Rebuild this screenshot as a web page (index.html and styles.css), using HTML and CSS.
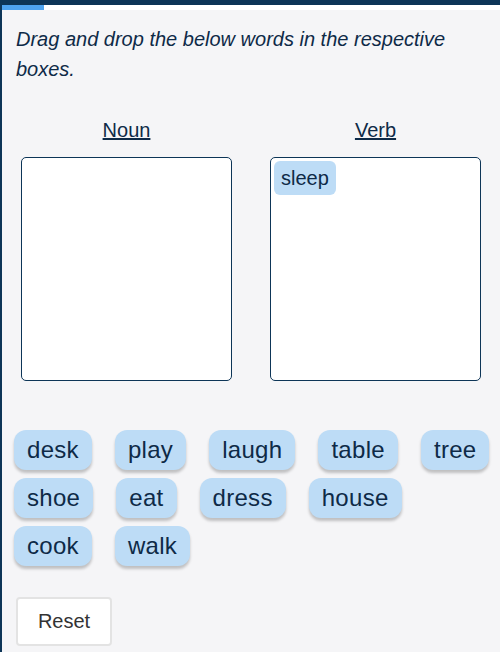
FILE: index.html
```html
<!DOCTYPE html>
<html lang="en">
<head>
<meta charset="utf-8">
<title>Drag and drop</title>
<link rel="stylesheet" href="styles.css">
</head>
<body>
<div class="topbar"></div>
<div class="progress"><div class="progress-fill" style="width:42px"></div></div>
<main class="panel">
  <p class="prompt">Drag and drop the below words in the respective boxes.</p>
  <div class="columns">
    <section class="col">
      <h2 class="col-title">Noun</h2>
      <div class="dropbox"></div>
    </section>
    <section class="col">
      <h2 class="col-title">Verb</h2>
      <div class="dropbox">
        <span class="chip chip-small">sleep</span>
      </div>
    </section>
  </div>
  <div class="pool">
    <span class="chip">desk</span>
    <span class="chip">play</span>
    <span class="chip">laugh</span>
    <span class="chip">table</span>
    <span class="chip">tree</span>
    <span class="chip">shoe</span>
    <span class="chip">eat</span>
    <span class="chip">dress</span>
    <span class="chip">house</span>
    <span class="chip">cook</span>
    <span class="chip">walk</span>
  </div>
  <button class="reset" type="button">Reset</button>
</main>
</body>
</html>
```
FILE: styles.css
```css
html, body {
  margin: 0;
  padding: 0;
  background: #f5f5f7;
  font-family: "Liberation Sans", Arial, sans-serif;
  color: #0e2a47;
}
.topbar {
  height: 5px;
  background: #0d3557;
}
.progress {
  height: 5px;
  background: #ffffff;
  border-left: 2px solid #0d3557;
}
.progress-fill {
  height: 100%;
  background: #4ea3ef;
}
.panel {
  border-left: 2px solid #0d3557;
  min-height: 642px;
  box-sizing: border-box;
  padding-top: 14px;
}
.prompt {
  margin: 0;
  padding: 0 14px;
  font-size: 20px;
  font-style: italic;
  line-height: 30px;
}
.columns {
  display: grid;
  grid-template-columns: 1fr 1fr;
  margin-top: 35px;
}
.col {
  display: flex;
  flex-direction: column;
  align-items: center;
}
.col-title {
  margin: 0;
  font-size: 20px;
  font-weight: normal;
  text-decoration: underline;
  line-height: 23px;
}
.dropbox {
  margin-top: 15px;
  width: 211px;
  height: 224px;
  box-sizing: border-box;
  background: #ffffff;
  border: 1px solid #0d3557;
  border-radius: 5px;
  padding: 3px;
  display: flex;
  flex-wrap: wrap;
  align-content: flex-start;
}
.chip {
  display: inline-block;
  background: #bddcf6;
  color: #0e2a47;
  font-size: 24px;
  line-height: 28px;
  letter-spacing: 0.3px;
  padding: 6px 13px;
  border-radius: 12px;
  box-shadow: 0 3px 3px rgba(0, 0, 0, 0.22);
}
.chip-small {
  font-size: 20px;
  line-height: 24px;
  letter-spacing: 0;
  padding: 5px 7px;
  border-radius: 6px;
  box-shadow: none;
}
.pool {
  display: flex;
  flex-wrap: wrap;
  column-gap: 23px;
  row-gap: 8px;
  margin-top: 49px;
  padding: 0 8px 0 12px;
}
.reset {
  display: block;
  margin: 31px 0 0 14px;
  width: 96px;
  height: 49px;
  background: #ffffff;
  border: 2px solid #e3e3e3;
  border-radius: 4px;
  font-family: "Liberation Sans", Arial, sans-serif;
  font-size: 20px;
  color: #333333;
}
```
